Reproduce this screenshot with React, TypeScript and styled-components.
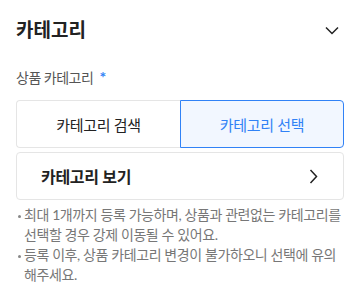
import styled, { createGlobalStyle } from "styled-components";

const GlobalStyle = createGlobalStyle`
  body {
    margin: 0;
    background: #fff;
    font-family: Lato, "Noto Sans CJK KR", sans-serif;
    color: #222;
  }
`;

const ChevronDown = () => (
  <svg width="14" height="9" viewBox="0 0 14 9" fill="none">
    <path d="M1 1.5L7 7.5L13 1.5" stroke="#222" strokeWidth="1.5" />
  </svg>
);

const ChevronRight = () => (
  <svg width="9" height="15" viewBox="0 0 9 15" fill="none">
    <path d="M1.5 1L7.5 7.5L1.5 14" stroke="#222" strokeWidth="1.5" />
  </svg>
);

export default function App() {
  return (
    <>
      <GlobalStyle />
      <Section>
        <Header>
          <Title>카테고리</Title>
          <ChevronDown />
        </Header>
        <Label>
          상품 카테고리 <Required>*</Required>
        </Label>
        <Toggle>
          <ToggleButton>카테고리 검색</ToggleButton>
          <ToggleButton active>카테고리 선택</ToggleButton>
        </Toggle>
        <BrowseRow>
          <BrowseText>카테고리 보기</BrowseText>
          <ChevronRight />
        </BrowseRow>
        <Notes>
          <Note>
            최대 1개까지 등록 가능하며, 상품과 관련없는 카테고리를 선택할 경우
            강제 이동될 수 있어요.
          </Note>
          <Note>
            등록 이후, 상품 카테고리 변경이 불가하오니 선택에 유의해주세요.
          </Note>
        </Notes>
      </Section>
    </>
  );
}

const Section = styled.section`
  display: flex;
  flex-direction: column;
  padding: 16px 16px 0;
`;

const Header = styled.div`
  display: flex;
  align-items: center;
  justify-content: space-between;
  height: 28px;
  padding-right: 5px;
`;

const Title = styled.h2`
  margin: 0;
  font-size: 19px;
  font-weight: 700;
  line-height: 28px;
  color: #222;
`;

const Label = styled.div`
  margin-top: 23px;
  font-size: 14px;
  line-height: 20px;
  letter-spacing: -0.5px;
  color: #555;
`;

const Required = styled.span`
  color: #3182f6;
  margin-left: 3px;
  font-size: 16px;
  font-weight: 700;
`;

const Toggle = styled.div`
  display: grid;
  grid-template-columns: 1fr 1fr;
  margin-top: 12px;
`;

const ToggleButton = styled.button<{ active?: boolean }>`
  height: 48px;
  padding: 0;
  font-family: inherit;
  font-size: 15px;
  letter-spacing: -0.3px;
  cursor: pointer;
  border: 1px solid ${({ active }) => (active ? "#3182f6" : "#e5e5e5")};
  background: ${({ active }) => (active ? "#f2f7ff" : "#fff")};
  color: ${({ active }) => (active ? "#3182f6" : "#222")};
  border-radius: ${({ active }) => (active ? "0 4px 4px 0" : "4px 0 0 4px")};
  ${({ active }) => !active && "border-right: none;"}
`;

const BrowseRow = styled.div`
  display: flex;
  align-items: center;
  justify-content: space-between;
  height: 46px;
  margin-top: 4px;
  padding: 0 25px 0 24px;
  border: 1px solid #e5e5e5;
  border-radius: 4px;
`;

const BrowseText = styled.span`
  font-size: 16px;
  font-weight: 700;
  letter-spacing: -0.3px;
  color: #222;
`;

const Notes = styled.ul`
  margin: 5px 0 0;
  padding: 0;
  list-style: none;
`;

const Note = styled.li`
  position: relative;
  padding-left: 8px;
  font-size: 14px;
  line-height: 20px;
  letter-spacing: -0.4px;
  color: #777;

  &::before {
    content: "";
    position: absolute;
    left: 2px;
    top: 10px;
    width: 3px;
    height: 3px;
    border-radius: 50%;
    background: #888;
  }
`;
